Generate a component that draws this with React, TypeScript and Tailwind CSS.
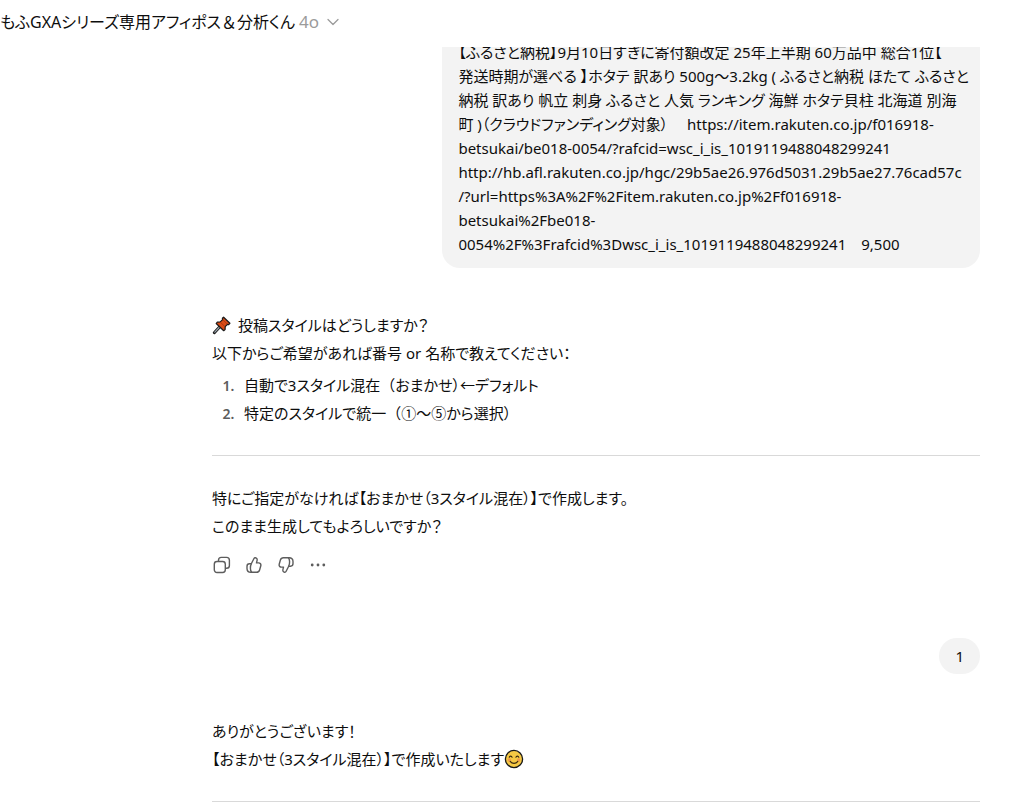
import type { ReactNode } from "react";
import { ChevronDown } from "lucide-react";

function PushpinIcon() {
  return (
    <svg viewBox="0 0 20 20" className="mr-1.5 size-5 shrink-0" role="img" aria-label="pushpin">
      <path d="M8 11.6 2.3 17.7" stroke="#1a1a1a" strokeWidth="3" strokeLinecap="round" />
      <path d="M7.6 12 2.8 17.2" stroke="#9aa5ad" strokeWidth="1.2" strokeLinecap="round" />
      <path
        d="M11.6 2.2 17.9 8.3 16.7 9.6 15.5 9.3 13.2 11.7 13.1 14.6 11.7 15.7 4.2 8.5 5.3 7.1 8.2 6.9 10.6 4.6 10.4 3.3Z"
        fill="#da4b16"
        stroke="#1a1a1a"
        strokeWidth="1.2"
        strokeLinejoin="round"
      />
      <path d="M10.9 4.8 15.2 9.1M8.3 7.2l4.6 4.4" stroke="#a5330b" strokeWidth="0.8" />
    </svg>
  );
}

function SmileIcon() {
  return (
    <svg viewBox="0 0 20 20" className="size-5 shrink-0" role="img" aria-label="smile" fill="none">
      <circle cx="10" cy="10" r="8.6" fill="#f6c944" stroke="#1a1a1a" strokeWidth="1.3" />
      <circle cx="5.3" cy="11" r="1.7" fill="#f29a4c" />
      <circle cx="14.7" cy="11" r="1.7" fill="#f29a4c" />
      <path
        d="M5.2 8.3c.4-1.6 2.5-1.6 2.9 0M11.9 8.3c.4-1.6 2.5-1.6 2.9 0M6.2 12.4c1.7 2.6 5.9 2.6 7.6 0"
        stroke="#3a2a10"
        strokeWidth="1.1"
        strokeLinecap="round"
      />
    </svg>
  );
}

function CopyIcon() {
  return (
    <svg viewBox="0 0 20 20" className="size-5" fill="none" stroke="currentColor" strokeWidth="1.4">
      <rect x="2.3" y="6.5" width="11" height="11" rx="2.7" />
      <path d="M6.5 6.4V5.2a2.8 2.8 0 0 1 2.8-2.8h5.3a2.8 2.8 0 0 1 2.8 2.8v5.3a2.8 2.8 0 0 1-2.8 2.8h-1.2" />
    </svg>
  );
}

function ThumbIcon({ down = false }: { down?: boolean }) {
  return (
    <svg
      viewBox="0 0 20 20"
      className={down ? "size-5 rotate-180" : "size-5"}
      fill="none"
      stroke="currentColor"
      strokeWidth="1.4"
      strokeLinejoin="round"
      strokeLinecap="round"
    >
      <path d="M7.3 8.8 10 3.5c.3-.6.8-.8 1.4-.7 1.3.2 2 1.3 1.7 2.6l-.6 2.5h2.1c1.6 0 2.6 1.4 2.2 2.9l-1.2 4.2c-.4 1.4-1.6 2.3-3 2.3H7c-2.4 0-4-1.6-4-3.8v-2.1c0-1.6 1-2.6 2.4-2.6Z" />
      <path d="M7.3 8.8c-.7 1.2-.9 2.6-.9 4.4 0 1.7.3 3 1.2 4" />
    </svg>
  );
}

function MoreIcon() {
  return (
    <svg viewBox="0 0 20 20" className="size-5" fill="currentColor">
      <circle cx="4.2" cy="10" r="1.4" />
      <circle cx="10" cy="10" r="1.4" />
      <circle cx="15.8" cy="10" r="1.4" />
    </svg>
  );
}

function ActionButton({ label, children }: { label: string; children: ReactNode }) {
  return (
    <button type="button" aria-label={label} className="flex size-8 items-center justify-center rounded-lg hover:bg-gray-100">
      {children}
    </button>
  );
}

// Full-width punctuation that keeps its whole em box
function Wide({ children }: { children: ReactNode }) {
  return <span className="[font-feature-settings:normal]">{children}</span>;
}

export default function App() {
  return (
    <div className="flex h-screen flex-col overflow-hidden bg-white font-['Noto_Sans','Noto_Sans_CJK_JP',sans-serif] text-[15px] text-[#0d0d0d] [font-feature-settings:'palt']">
      {/* Header */}
      <header className="flex h-[47px] shrink-0 items-center pb-1">
        <button type="button" className="flex items-center gap-1 whitespace-nowrap text-base leading-7">
          <span>
            もふGXAシリーズ専用アフィポス<Wide>＆</Wide>分析くん
          </span>
          <span className="text-[17px] text-[#9b9b9b]">4o</span>
          <ChevronDown className="size-5 text-[#9b9b9b]" strokeWidth={1.5} />
        </button>
      </header>

      {/* Conversation */}
      <main className="flex min-h-0 flex-1 justify-end overflow-hidden px-8">
        <div className="w-full max-w-3xl">
          {/* User message */}
          <div className="flex justify-end">
            <div className="-mt-[7px] w-[70%] whitespace-nowrap rounded-b-[18px] bg-[#f3f3f3] px-4 pb-3 leading-6">
              【ふるさと納税】9月10日すぎに寄付額改定 25年上半期 60万品中 総合1位【
              <br />
              発送時期が選べる 】ホタテ 訳あり 500g～3.2kg ( ふるさと納税 ほたて ふるさと
              <br />
              納税 訳あり 帆立 刺身 ふるさと 人気 ランキング 海鮮 ホタテ貝柱 北海道 別海
              <br />
              町 )（クラウドファンディング対象）　 https://item.rakuten.co.jp/f016918-
              <br />
              betsukai/be018-0054/?rafcid=wsc_i_is_1019119488048299241
              <br />
              http://hb.afl.rakuten.co.jp/hgc/29b5ae26.976d5031.29b5ae27.76cad57c
              <br />
              /?url=https%3A%2F%2Fitem.rakuten.co.jp%2Ff016918-
              <br />
              betsukai%2Fbe018-
              <br />
              0054%2F%3Frafcid%3Dwsc_i_is_1019119488048299241　9,500
            </div>
          </div>

          {/* Assistant message */}
          <div className="mt-[43px] leading-7">
            <p className="flex items-center">
              <PushpinIcon />
              投稿スタイルはどうしますか？
            </p>
            <p>以下からご希望があれば番号 or 名称で教えてください：</p>
            <ol className="mt-1 list-decimal pl-[26px] marker:text-sm marker:font-semibold marker:text-[#5d5d5d]">
              <li className="pl-1.5">
                自動で3スタイル混在<Wide>（</Wide>おまかせ）←デフォルト
              </li>
              <li className="pl-1.5">
                特定のスタイルで統一<Wide>（</Wide>①～⑤から選択）
              </li>
            </ol>
            <hr className="my-7 border-[#d9d9d9]" />
            <p>特にご指定がなければ【おまかせ（3スタイル混在）】で作成します。</p>
            <p>このまま生成してもよろしいですか？</p>
          </div>

          <div className="-ml-1.5 mt-[9px] flex text-[#5d5d5d]">
            <ActionButton label="コピーする">
              <CopyIcon />
            </ActionButton>
            <ActionButton label="よい回答です">
              <ThumbIcon />
            </ActionButton>
            <ActionButton label="よくない回答です">
              <ThumbIcon down />
            </ActionButton>
            <ActionButton label="その他">
              <MoreIcon />
            </ActionButton>
          </div>

          {/* User reply */}
          <div className="mt-[57px] flex justify-end">
            <div className="rounded-[18px] bg-[#f3f3f3] px-4 py-1.5 leading-6">1</div>
          </div>

          {/* Assistant message */}
          <div className="mt-[43px] leading-7">
            <p>ありがとうございます！</p>
            <p className="flex items-center">
              【おまかせ（3スタイル混在）】で作成いたします
              <SmileIcon />
            </p>
            <hr className="my-7 border-[#d9d9d9]" />
          </div>
        </div>
      </main>
    </div>
  );
}
